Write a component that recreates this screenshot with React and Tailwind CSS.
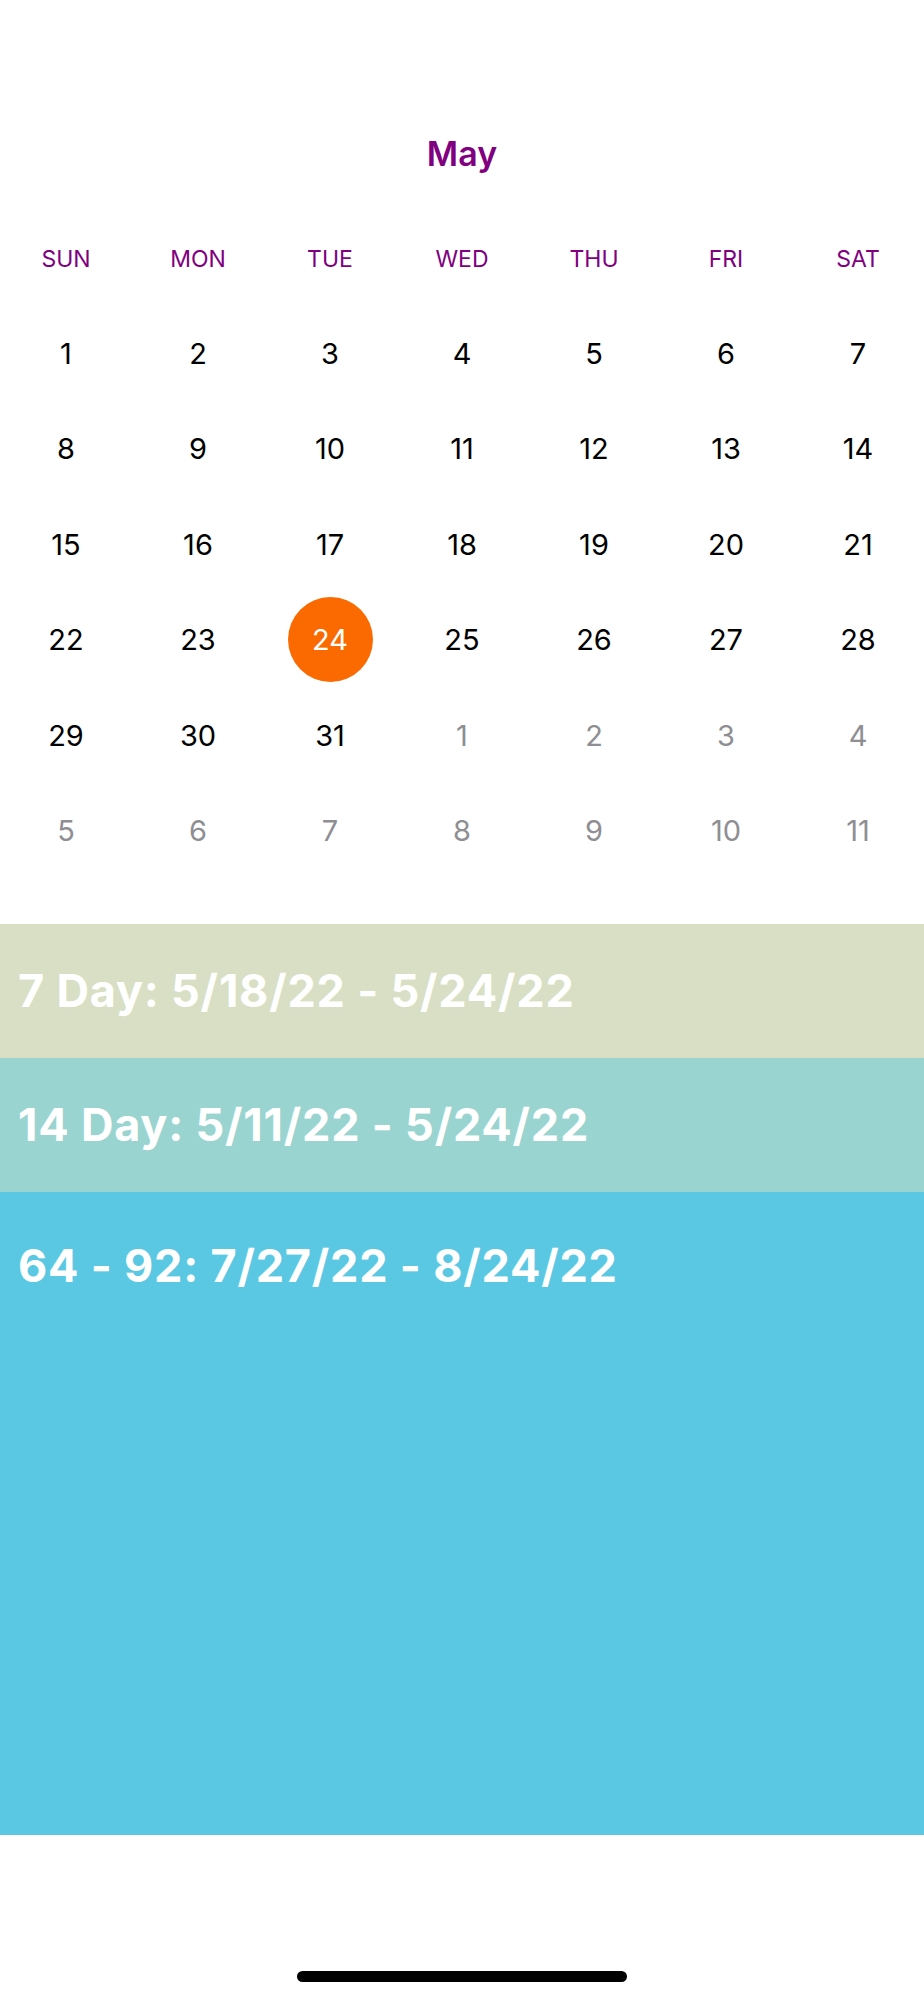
export default function App() {
  const rows = [
    [1, 2, 3, 4, 5, 6, 7],
    [8, 9, 10, 11, 12, 13, 14],
    [15, 16, 17, 18, 19, 20, 21],
    [22, 23, 24, 25, 26, 27, 28],
    [29, 30, 31, 1, 2, 3, 4],
    [5, 6, 7, 8, 9, 10, 11],
  ];
  const days = ["SUN", "MON", "TUE", "WED", "THU", "FRI", "SAT"];
  const font = { fontFamily: "Inter, 'Noto Sans', sans-serif" };
  return (
    <div className="w-[924px] h-[2000px] bg-white flex flex-col" style={font}>
      <div className="pt-[130px] h-[178px] flex justify-center">
        <div className="h-[48px] leading-[48px] text-[34px] font-semibold text-[#800080]">May</div>
      </div>
      <div className="mt-[57px] grid grid-cols-7 h-[48px]">
        {days.map((d) => (
          <div key={d} className="flex items-center justify-center text-[23px] text-[#800080]">
            {d}
          </div>
        ))}
      </div>
      <div className="mt-[22.5px] flex flex-col">
        {rows.map((r, ri) => (
          <div key={ri} className="grid grid-cols-7 h-[95.5px]">
            {r.map((n, ci) => {
              const other = ri >= 4 && !(ri === 4 && ci < 3);
              const sel = ri === 3 && ci === 2;
              return (
                <div key={ci} className="flex items-center justify-center">
                  {sel ? (
                    <div className="w-[85px] h-[85px] rounded-full bg-[#fb6a00] flex items-center justify-center text-[29px] text-white">
                      {n}
                    </div>
                  ) : (
                    <span className={`text-[29px] ${other ? "text-[#8e8e93]" : "text-black"}`}>{n}</span>
                  )}
                </div>
              );
            })}
          </div>
        ))}
      </div>
      <div className="mt-[45.5px] h-[134px] bg-[#d9dfc4] flex items-center px-[18px]">
        <span className="text-[45px] font-bold text-white tracking-[0.8px]">7 Day: 5/18/22 - 5/24/22</span>
      </div>
      <div className="h-[134px] bg-[#9ad4d0] flex items-center px-[18px]">
        <span className="text-[45px] font-bold text-white tracking-[0.8px]">14 Day: 5/11/22 - 5/24/22</span>
      </div>
      <div className="h-[643px] bg-[#5bc8e3] px-[18px] pt-[44px]">
        <div className="h-[60px] flex items-center text-[45px] font-bold text-white tracking-[0.8px]">
          64 - 92: 7/27/22 - 8/24/22
        </div>
      </div>
      <div className="flex-1 flex items-end justify-center pb-[18px]">
        <div className="w-[330px] h-[11px] rounded-full bg-black" />
      </div>
    </div>
  );
}
